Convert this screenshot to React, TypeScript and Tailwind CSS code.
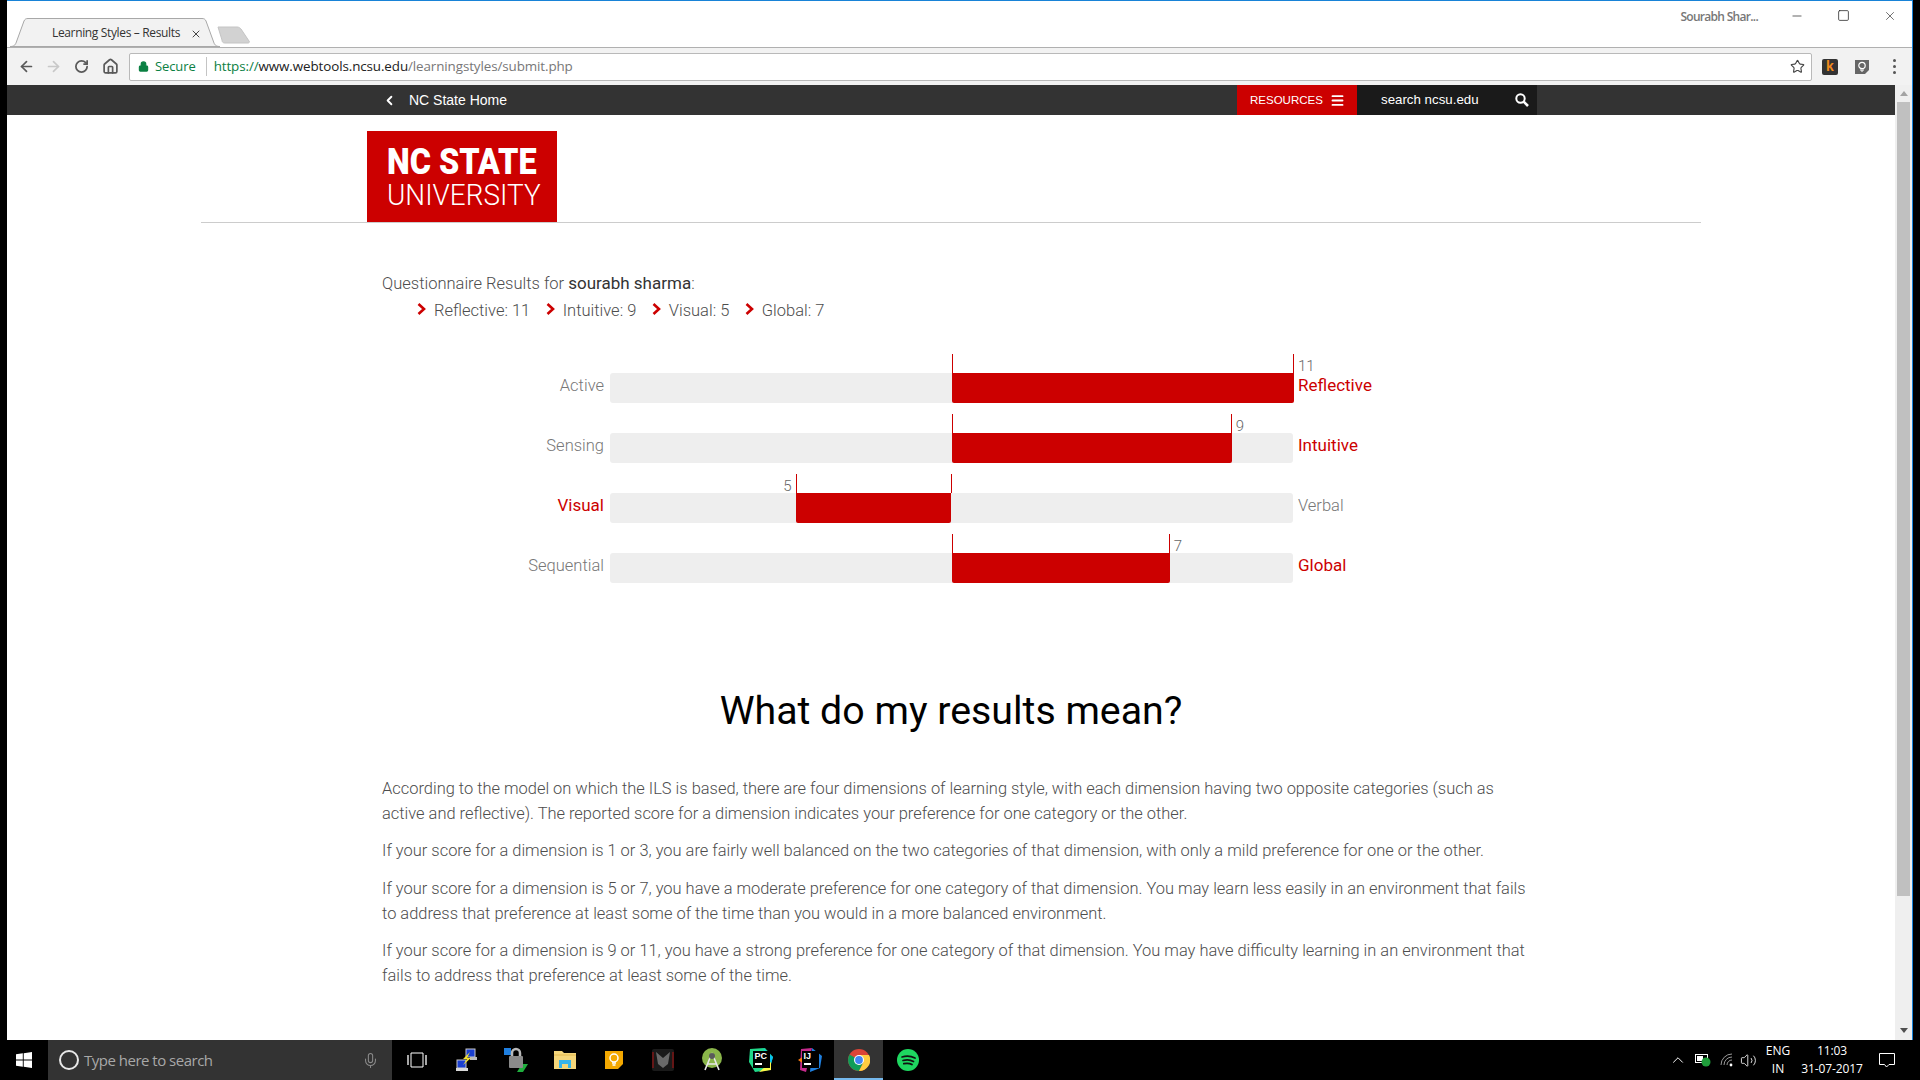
import {
  ArrowLeft,
  ArrowRight,
  ChevronLeft,
  ChevronUp,
  Home,
  Lock,
  Menu,
  Mic,
  Minus,
  RotateCw,
  Square,
  Star,
  Volume2,
  X,
} from "lucide-react";

const scores = [
  { left: "Active", right: "Reflective", score: 11, side: "right" },
  { left: "Sensing", right: "Intuitive", score: 9, side: "right" },
  { left: "Visual", right: "Verbal", score: 5, side: "left" },
  { left: "Sequential", right: "Global", score: 7, side: "right" },
];

const summary = ["Reflective: 11", "Intuitive: 9", "Visual: 5", "Global: 7"];

function Row({ left, right, score, side }: { left: string; right: string; score: number; side: string }) {
  const width = (score / 11) * 342;
  const onLeft = side === "left";

  return (
    <div className="flex h-[30px]">
      <div className={`w-[224px] text-right leading-[25px] ${onLeft ? "text-[17px] font-normal text-[#cc0000]" : "text-[16.5px] text-[#777777]"}`}>
        {left}
      </div>
      <div className="relative ml-[6px] mr-[5px] h-[30px] w-[683px] rounded-[3px] bg-[#eeeeee]">
        <div
          className={`absolute top-0 h-[30px] rounded-b-[2px] bg-[#cc0000] ${onLeft ? "" : "left-[342px]"}`}
          style={onLeft ? { left: 342 - width - 1, width } : { width }}
        />
        {/* ticks */}
        <div className={`absolute top-[-19px] h-[19px] w-px bg-[#cc0000] ${onLeft ? "left-[341px]" : "left-[342px]"}`} />
        <div
          className="absolute top-[-19px] h-[19px] w-px bg-[#cc0000]"
          style={{ left: onLeft ? 341 - width : 342 + width - 1 }}
        />
        <div
          className="absolute top-[-17px] text-[15px] leading-[20px] text-[#666666]"
          style={onLeft ? { right: 683 - (341 - width) + 4 } : { left: 342 + width + 4 }}
        >
          {score}
        </div>
      </div>
      <div className={`leading-[25px] ${onLeft ? "text-[16.5px] text-[#777777]" : "text-[17px] font-normal text-[#cc0000]"}`}>{right}</div>
    </div>
  );
}

function NcStateLogo() {
  return (
    <div className="ml-[166px] h-[91px] w-[190px] overflow-hidden bg-[#cc0000] pl-[19.5px] pt-[12px] font-['Roboto',sans-serif] text-white">
      <div className="origin-left scale-x-[0.875] whitespace-nowrap text-[37px] font-black leading-[37px]">NC STATE</div>
      <div className="origin-left scale-x-[0.93] whitespace-nowrap text-[30px] font-light leading-[30px]">UNIVERSITY</div>
    </div>
  );
}

function TabStrip() {
  return (
    <div className="flex h-[46px] items-end pl-[3px]">
      <div className="relative flex h-[29px] w-[210px] items-center pl-[42px]">
        <svg className="absolute inset-0" width="210" height="29" viewBox="0 0 210 29">
          <path
            d="M0 28.5 C4 28.5 5 27 6 25 L14 3 C15 1 16 .5 18 .5 L192 .5 C194 .5 195 1 196 3 L204 25 C205 27 206 28.5 210 28.5 Z"
            fill="#f2f2f2"
            stroke="#a8a8a8"
          />
        </svg>
        <span className="relative whitespace-nowrap font-['Open_Sans',sans-serif] text-[12px] tracking-[-0.35px] text-[#333333]">
          Learning Styles – Results
        </span>
        <X className="absolute left-[180px] top-[10px] text-[#444444]" size={12} strokeWidth={2} />
      </div>
      <svg className="-ml-[3px] mb-[3px]" width="34" height="18" viewBox="0 0 34 18">
        <path d="M1 1 L20 1 C22 1 23 2 24 3 L32 15 C33 16 32 17 31 17 L8 17 C6 17 5 16 5 14 Z" fill="#d2d2d2" stroke="#c4c4c4" />
      </svg>
      <div className="relative ml-auto">
        <div className="absolute bottom-[21px] right-[154px] whitespace-nowrap font-['Open_Sans',sans-serif] text-[12px] font-semibold tracking-[-0.7px] text-[#777777]">
          Sourabh Shar...
        </div>
        <div className="absolute bottom-[24px] right-[15px] flex gap-[33px] text-[#222222]">
          <Minus size={14} strokeWidth={1.2} />
          <Square size={13} strokeWidth={1.4} />
          <X size={14} strokeWidth={1.1} />
        </div>
      </div>
    </div>
  );
}

function Toolbar() {
  return (
    <div className="flex h-[38px] items-center border-t border-[#b0b0b0] bg-[#f2f2f2] pl-[11px]">
      <ArrowLeft className="text-[#5a5a5a]" size={17} strokeWidth={2.4} />
      <ArrowRight className="ml-[10px] text-[#c8c8c8]" size={17} strokeWidth={2.4} />
      <RotateCw className="ml-[12px] text-[#5a5a5a]" size={15} strokeWidth={2.8} />
      <Home className="ml-[13px] text-[#5a5a5a]" size={17} strokeWidth={2.4} />
      <div className="ml-[10px] flex h-[28px] w-[1683px] items-center rounded-[2px] border border-[#b9b9b9] bg-white pl-[8px] font-['Open_Sans',sans-serif] text-[13px] tracking-[-0.1px]">
        <Lock className="fill-[#0b8043] text-[#0b8043]" size={11} strokeWidth={2.5} />
        <span className="ml-[6px] text-[#0b8043]">Secure</span>
        <span className="ml-[10px] h-[19px] w-px bg-[#c4c4c4]" />
        <span className="ml-[7px] text-[13.4px] text-[#0b8043]">https://</span>
        <span className="text-[13.4px] text-[#222222]">www.webtools.ncsu.edu</span>
        <span className="text-[13.4px] text-[#777777]">/learningstyles/submit.php</span>
        <Star className="ml-auto mr-[6px] text-[#444444]" size={15} strokeWidth={1.8} />
      </div>
      <div className="ml-[10px] flex h-[16px] w-[16px] items-center justify-center rounded-[2px] bg-[#333333] font-['Liberation_Sans',sans-serif] text-[14px] font-bold text-[#f08a1c]">
        k
      </div>
      <svg className="ml-[16px]" width="16" height="16" viewBox="0 0 16 16">
        <path d="M1 1 H15 V11 L11 15 H1 Z" fill="#666666" />
        <circle cx="8" cy="6.5" r="3.2" fill="none" stroke="#ffffff" strokeWidth="1.2" />
        <path d="M7 10 V12 H9 V10" fill="none" stroke="#ffffff" />
      </svg>
      <div className="ml-[23px] flex flex-col gap-[3px]">
        <span className="h-[3px] w-[3px] rounded-full bg-[#555555]" />
        <span className="h-[3px] w-[3px] rounded-full bg-[#555555]" />
        <span className="h-[3px] w-[3px] rounded-full bg-[#555555]" />
      </div>
    </div>
  );
}

function NavBar() {
  return (
    <div className="h-[30px] shrink-0 bg-[#333333] font-['Liberation_Sans',sans-serif] text-white">
      <div className="mx-auto flex h-[30px] w-[1172px] items-center">
        <ChevronLeft className="ml-[17px]" size={15} strokeWidth={3} />
        <span className="ml-[12px] text-[14px]">NC State Home</span>
        <div className="ml-auto flex h-[30px] w-[120px] items-center bg-[#cc0000] pl-[13px] pt-px text-[11.5px]">
          RESOURCES
          <Menu className="ml-[7px]" size={15} strokeWidth={3} />
        </div>
        <div className="flex h-[30px] w-[180px] items-center bg-[#1a1a1a] pl-[24px] text-[13.3px]">
          search ncsu.edu
          <svg className="ml-[36px]" width="14" height="14" viewBox="0 0 14 14">
            <circle cx="5.5" cy="5.5" r="4.2" fill="none" stroke="#ffffff" strokeWidth="2" />
            <path d="M8.6 8.6 L13 13" stroke="#ffffff" strokeWidth="2.6" />
          </svg>
        </div>
      </div>
    </div>
  );
}

function PageBody() {
  return (
    <div className="min-h-0 flex-1 overflow-hidden bg-white font-['Roboto',sans-serif] font-light text-[#4d4d4d]">
      <div className="mx-auto w-[1500px] border-b border-[#cccccc] pt-4">
        <NcStateLogo />
      </div>

      <div className="mx-auto w-[1142px] pt-[46px]">
        <p className="pl-[2px] text-[16.5px] leading-[29px]">
          Questionnaire Results for <span className="text-[17px] font-normal text-[#333333]">sourabh sharma</span>:
        </p>
        <div className="flex pl-[37px] text-[16.5px] leading-[25px]">
          {summary.map((item) => (
            <span key={item} className="mr-[15.5px] flex items-center whitespace-nowrap">
              <svg className="mr-[8px] mb-[3px]" width="9" height="12" viewBox="0 0 9 12">
                <path d="M1.5 1 L7 6 L1.5 11" fill="none" stroke="#cc0000" strokeWidth="2.6" />
              </svg>
              {item}
            </span>
          ))}
        </div>

        {/* Chart */}
        <div className="mt-[50px] flex flex-col gap-[30px]">
          {scores.map((row) => (
            <Row key={row.left} {...row} />
          ))}
        </div>

        <h2 className="mt-[103px] text-center text-[39.3px] font-normal leading-[50px] text-black">
          What do my results mean?
        </h2>

        <div className="mt-[40px] w-[1150px] pl-[2px] text-[16.45px] leading-[25px]">
          <p className="mb-[12px]">
            According to the model on which the ILS is based, there are four dimensions of learning style, with each
            dimension having two opposite categories (such as active and reflective). The reported score for a dimension
            indicates your preference for one category or the other.
          </p>
          <p className="mb-[13px]">
            If your score for a dimension is 1 or 3, you are fairly well balanced on the two categories of that dimension,
            with only a mild preference for one or the other.
          </p>
          <p className="mb-[12px]">
            If your score for a dimension is 5 or 7, you have a moderate preference for one category of that dimension. You
            may learn less easily in an environment that fails to address that preference at least some of the time than you
            would in a more balanced environment.
          </p>
          <p className="mb-[12px]">
            If your score for a dimension is 9 or 11, you have a strong preference for one category of that dimension. You
            may have difficulty learning in an environment that fails to address that preference at least some of the time.
          </p>
          <p className="mt-[52px]">
            For more information about your preferences and what they mean for your learning, see the handouts listed in the
            links at the bottom of this page. When
          </p>
        </div>
      </div>
    </div>
  );
}

function ScrollBar() {
  return (
    <div className="flex w-[17px] shrink-0 flex-col items-center bg-[#efefef]">
      <div className="flex h-[17px] w-full items-center justify-center">
        <div className="h-0 w-0 border-x-[4px] border-b-[5px] border-x-transparent border-b-[#a3a3a3]" />
      </div>
      <div className="h-[794px] w-[13px] bg-[#c0c0c0]" />
      <div className="mb-[7px] mt-auto h-0 w-0 border-x-[4px] border-t-[5px] border-x-transparent border-t-[#505050]" />
    </div>
  );
}

function TaskIcon({ children, active }: { children: React.ReactNode; active?: boolean }) {
  return (
    <div
      className={`flex h-[40px] w-[49px] items-center justify-center ${
        active ? "border-b-2 border-[#76b9ed] bg-[#333333] pt-[2px]" : ""
      }`}
    >
      {children}
    </div>
  );
}

function IdeBadge({ label }: { label: string }) {
  return (
    <div className="absolute left-[4px] top-[3px] flex h-[17px] w-[17px] flex-col bg-black pl-[2px]">
      <span className="h-[10px] font-['Liberation_Sans',sans-serif] text-[9px] font-bold leading-[10px] text-white">{label}</span>
      <div className="mt-[2px] h-[1.5px] w-[7px] bg-white" />
    </div>
  );
}

function TaskBar() {
  return (
    <div className="flex h-[40px] shrink-0 items-center bg-black text-white">
      <div className="flex h-[40px] w-[48px] items-center justify-center">
        <svg width="16" height="16" viewBox="0 0 16 16">
          <path d="M0 2.3 L6.8 1.3 V7.5 H0 Z M7.7 1.2 L16 0 V7.5 H7.7 Z M0 8.4 H6.8 V14.7 L0 13.7 Z M7.7 8.4 H16 V16 L7.7 14.8 Z" fill="#ffffff" />
        </svg>
      </div>
      <div className="flex h-[40px] w-[344px] items-center bg-[#333333] pl-[11px] font-['Open_Sans',sans-serif] text-[15px] text-[#a8a8a8]">
        <div className="h-[20px] w-[20px] rounded-full border-[2.5px] border-[#e8e8e8]" />
        <span className="ml-[5px] tracking-[-0.5px]">Type here to search</span>
        <Mic className="ml-auto mr-[13px] text-[#8a8a8a]" size={17} strokeWidth={1.5} />
      </div>
      <div className="flex w-[50px] justify-center">
        <svg width="20" height="16" viewBox="0 0 20 16">
          <path d="M4 1 H16 V15 H4 Z" fill="none" stroke="#ffffff" strokeWidth="1" />
          <path d="M1 3 V13 M19 3 V13" stroke="#ffffff" strokeWidth="1.3" />
        </svg>
      </div>
      <TaskIcon>
        <svg width="24" height="24" viewBox="0 0 24 24">
          <rect x="11" y="1" width="9" height="8" fill="#1a3fd0" stroke="#c8c8c8" />
          <rect x="2" y="12" width="9" height="8" fill="#1a3fd0" stroke="#c8c8c8" />
          <rect x="1" y="20" width="12" height="3" fill="#d8d8d8" />
          <rect x="15" y="9" width="7" height="3" fill="#bbbbbb" />
          <path d="M15 4 L8 11 L12 11 L8 17 L16 10 L12 10 Z" fill="#f4e22c" />
        </svg>
      </TaskIcon>
      <TaskIcon>
        <svg width="26" height="28" viewBox="0 0 26 28">
          <path d="M1 2 H8 V9 H1 Z" fill="#1f7fe0" />
          <path d="M19 18 H25 L20 26 H14 Z" fill="#1fae3d" />
          <path d="M9 10 V7 A4 4 0 0 1 17 7 V10" fill="none" stroke="#b8b8b8" strokeWidth="2.5" />
          <rect x="6" y="10" width="14" height="12" rx="1" fill="#8a8a8a" />
        </svg>
      </TaskIcon>
      <TaskIcon>
        <svg width="22" height="20" viewBox="0 0 22 20">
          <path d="M0 1 H8 L10 3 H22 V19 H0 Z" fill="#f5d67a" />
          <path d="M0 5 H22" stroke="#e2b84e" />
          <path d="M5 18 V10 H17 V18 H14 V14 H8 V18 Z" fill="#37b4ea" />
        </svg>
      </TaskIcon>
      <TaskIcon>
        <svg width="20" height="20" viewBox="0 0 20 20">
          <path d="M1 1 H19 V14 L14 19 H1 Z" fill="#f4a800" />
          <circle cx="10" cy="8" r="4" fill="none" stroke="#ffffff" strokeWidth="1.5" />
          <path d="M8 13 H12 M8.5 15 H11.5" stroke="#ffffff" strokeWidth="1.3" />
        </svg>
      </TaskIcon>
      <TaskIcon>
        <svg width="22" height="22" viewBox="0 0 22 22">
          <rect x="0" y="0" width="22" height="22" rx="2" fill="#1a1a1a" />
          <path d="M1 3 V19 M21 3 V19" stroke="#8c1414" strokeWidth="1.3" />
          <path d="M4 3 L11 9 L18 3 L16 15 L11 19 L6 15 Z" fill="#6a6a6a" />
        </svg>
      </TaskIcon>
      <TaskIcon>
        <svg width="22" height="24" viewBox="0 0 22 24">
          <circle cx="11" cy="10" r="10" fill="#8ab54a" />
          <path d="M11 5 L4 22 M11 5 L18 22 M6 16 H16" stroke="#e8e8e8" strokeWidth="1.6" fill="none" />
          <circle cx="11" cy="8" r="3" fill="#5a5a5a" />
        </svg>
      </TaskIcon>
      <TaskIcon>
        <div className="relative h-[24px] w-[24px]">
          <svg className="absolute inset-0" width="24" height="24" viewBox="0 0 24 24">
            <path d="M1 1 L16 0 L24 9 L20 22 L6 24 L0 14 Z" fill="#21d789" />
            <path d="M14 0 L24 9 L22 16 Z" fill="#07c3f2" />
            <path d="M10 24 L22 22 L22 14 Z" fill="#fcf84a" />
          </svg>
          <IdeBadge label="PC" />
        </div>
      </TaskIcon>
      <TaskIcon>
        <div className="relative h-[24px] w-[24px]">
          <svg className="absolute inset-0" width="24" height="24" viewBox="0 0 24 24">
            <path d="M3 1 L14 0 L8 24 L2 22 Z" fill="#c52a8c" />
            <path d="M14 0 L24 8 L22 20 L12 24 Z" fill="#1f80e0" />
            <path d="M0 12 L6 8 L6 16 Z" fill="#f97a12" />
          </svg>
          <IdeBadge label="IJ" />
        </div>
      </TaskIcon>
      <TaskIcon active>
        <svg width="22" height="22" viewBox="0 0 22 22">
          <circle cx="11" cy="11" r="11" fill="#db4437" />
          <path d="M11 11 L1.5 5.5 A11 11 0 0 0 11 22 L16.5 11 Z" fill="#0f9d58" />
          <path d="M11 6 H21 A11 11 0 0 1 11 22 L15.3 13.5 Z" fill="#ffcd40" />
          <circle cx="11" cy="11" r="5" fill="#ffffff" />
          <circle cx="11" cy="11" r="3.9" fill="#4285f4" />
        </svg>
      </TaskIcon>
      <TaskIcon>
        <svg width="22" height="22" viewBox="0 0 22 22">
          <circle cx="11" cy="11" r="11" fill="#1ed760" />
          <path d="M5 8 C9 6.8 14 7 18 9 M6 11.5 C9.5 10.5 13.5 10.8 16.5 12.5 M6.8 14.7 C9.7 14 12.7 14.2 15 15.6" fill="none" stroke="#111111" strokeWidth="1.7" strokeLinecap="round" />
        </svg>
      </TaskIcon>

      {/* Tray */}
      <div className="ml-auto flex items-center pr-[25px] font-['Open_Sans',sans-serif] text-[12px] leading-[18px] text-white">
        <ChevronUp size={18} strokeWidth={1.3} />
        <svg className="ml-[8px]" width="16" height="14" viewBox="0 0 16 14">
          <rect x="0.5" y="1.5" width="12" height="8" fill="none" stroke="#ffffff" />
          <rect x="2" y="3" width="6" height="5" fill="#ffffff" />
          <circle cx="11" cy="9" r="4.5" fill="#1f9d3a" />
        </svg>
        <svg className="ml-[9px]" width="14" height="14" viewBox="0 0 14 14">
          <path d="M1 12 A11 11 0 0 1 12 1 M4 12 A8 8 0 0 1 12 4 M7 12 A5 5 0 0 1 12 7" fill="none" stroke="#999999" strokeWidth="1" />
          <circle cx="11" cy="12" r="1.4" fill="#ffffff" />
        </svg>
        <Volume2 className="ml-[6px]" size={17} strokeWidth={1.2} />
        <div className="ml-[8px] w-[26px] text-center">
          <div>ENG</div>
          <div>IN</div>
        </div>
        <div className="ml-[10px] w-[62px] text-center tracking-[-0.1px]">
          <div>11:03</div>
          <div className="whitespace-nowrap">31-07-2017</div>
        </div>
        <svg className="ml-[16px]" width="16" height="16" viewBox="0 0 16 16">
          <path d="M.5 1.5 H15.5 V12.5 H10 L7.5 15 L5.5 12.5 H.5 Z" fill="none" stroke="#ffffff" />
        </svg>
      </div>
    </div>
  );
}

export default function App() {
  return (
    <div className="flex h-screen flex-col overflow-hidden bg-black">
      <div className="ml-[7px] mr-[7px] flex min-h-0 flex-1 flex-col border-r border-t border-[#1883d7] bg-white">
        <TabStrip />
        <Toolbar />
        <div className="flex min-h-0 flex-1">
          <div className="flex min-w-0 flex-1 flex-col">
            <NavBar />
            <PageBody />
          </div>
          <ScrollBar />
        </div>
      </div>
      <TaskBar />
    </div>
  );
}
